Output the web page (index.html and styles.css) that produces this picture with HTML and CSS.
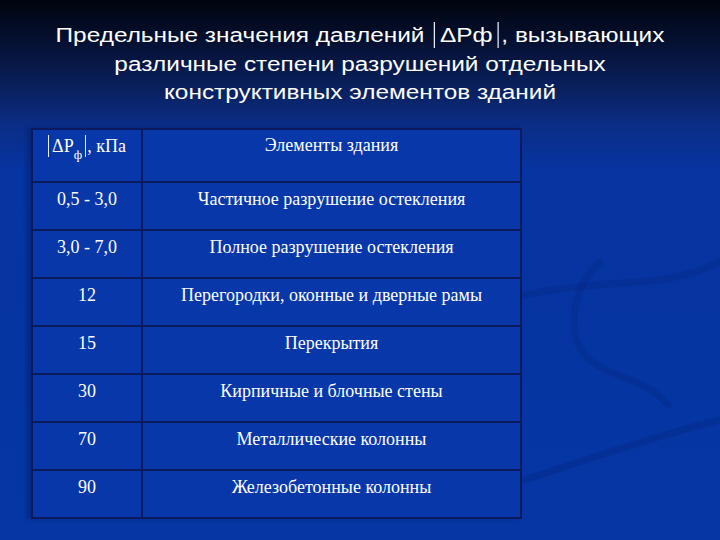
FILE: index.html
```html
<!DOCTYPE html>
<html lang="ru">
<head>
<meta charset="utf-8">
<link rel="stylesheet" href="styles.css">
</head>
<body>
<div class="slide">
  <svg class="swoosh" width="720" height="540" viewBox="0 0 720 540" aria-hidden="true">
    <path d="M525 295 C 560 288, 600 284, 640 282 C 670 280, 700 272, 720 262" />
    <path d="M600 262 C 585 275, 570 300, 575 335 C 585 380, 640 370, 668 405" />
    <path d="M525 480 C 600 455, 660 435, 720 420" />
  </svg>
  <h1 class="title">
    <span class="line">Предельные значения давлений <span class="abs">ΔРф</span>, вызывающих</span>
    <span class="line">различные степени разрушений отдельных</span>
    <span class="line">конструктивных элементов зданий</span>
  </h1>
  <table class="grid">
    <tr class="head">
      <td class="c1"><span class="abs small">ΔР<sub>ф</sub></span>, кПа</td>
      <td class="c2">Элементы здания</td>
    </tr>
    <tr><td class="c1">0,5 - 3,0</td><td class="c2">Частичное разрушение остекления</td></tr>
    <tr><td class="c1">3,0 - 7,0</td><td class="c2">Полное разрушение остекления</td></tr>
    <tr><td class="c1">12</td><td class="c2">Перегородки, оконные и дверные рамы</td></tr>
    <tr><td class="c1">15</td><td class="c2">Перекрытия</td></tr>
    <tr><td class="c1">30</td><td class="c2">Кирпичные и блочные стены</td></tr>
    <tr><td class="c1">70</td><td class="c2">Металлические колонны</td></tr>
    <tr><td class="c1">90</td><td class="c2">Железобетонные колонны</td></tr>
  </table>
</div>
</body>
</html>
```
FILE: styles.css
```css
html, body {
  margin: 0;
  padding: 0;
}
body {
  width: 720px;
  height: 540px;
  overflow: hidden;
}
.slide {
  position: relative;
  width: 720px;
  height: 540px;
  background: linear-gradient(to bottom, #01040e 0px, #051030 40px, #0a215f 90px, #0b2d86 125px, #0634a0 170px, #0536a3 540px);
  overflow: hidden;
}
.swoosh {
  position: absolute;
  left: 0;
  top: 0;
}
.swoosh path {
  fill: none;
  stroke: #02237a;
  stroke-width: 7;
  stroke-linecap: round;
  opacity: 0.3;
}
.title {
  position: relative;
  margin: 0;
  padding-top: 21px;
  text-align: center;
  font-family: "Liberation Sans", Arial, sans-serif;
  font-weight: normal;
  font-size: 19.5px;
  line-height: 28.5px;
  color: #ffffff;
  transform: scaleX(1.25);
  transform-origin: 360px 0;
}
.line {
  display: block;
}
.abs {
  display: inline-block;
  border-left: 1px solid #e8ecff;
  border-right: 1px solid #e8ecff;
  padding: 0 4px;
  line-height: 26px;
  margin: 0 2px;
}
.grid {
  position: relative;
  margin: 21px 0 0 31px;
  width: 491px;
  border-collapse: collapse;
  font-family: "Liberation Serif", "Times New Roman", serif;
  font-size: 18px;
  color: #ffffff;
  background: #0737a8;
  box-shadow: -4px 0 4px rgba(2, 20, 80, 0.35);
}
.grid td {
  border: 2px solid #0b1a5c;
  height: 48px;
  padding: 6px 4px 0;
  box-sizing: border-box;
  vertical-align: top;
  text-align: center;
  line-height: 20px;
}
.grid .head td {
  height: 53px;
  padding-top: 5px;
}
.grid .c1 {
  width: 110px;
}
.abs.small {
  padding: 0 3px;
  margin: 0 1px 0 0;
  line-height: 22px;
}
sub {
  font-size: 13px;
  line-height: 0;
  vertical-align: -7px;
}
```
